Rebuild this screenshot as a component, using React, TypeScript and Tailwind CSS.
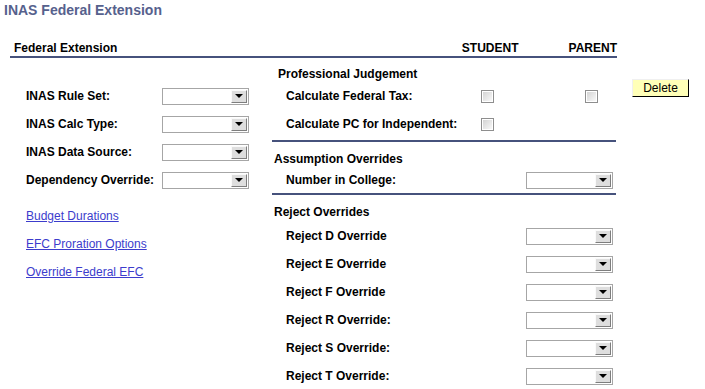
import React from "react";

function Dropdown() {
  return (
    <div className="w-[87px] h-[17px] border border-[#a6a6a6] bg-white flex justify-end items-stretch p-px">
      <div className="w-[16px] bg-[#dedede] border border-t-[#fafafa] border-l-[#fafafa] border-r-[#7e7e7e] border-b-[#7e7e7e] flex items-center justify-center">
        <div className="w-0 h-0 border-l-[4px] border-r-[4px] border-t-[4px] border-l-transparent border-r-transparent border-t-black" />
      </div>
    </div>
  );
}

function Checkbox() {
  return (
    <div className="w-[13px] h-[13px] border border-[#8e8e8e] bg-white p-px">
      <div className="w-full h-full bg-gradient-to-br from-[#d4d4d4] to-[#f8f8f8]" />
    </div>
  );
}

const leftRows = ["INAS Rule Set:", "INAS Calc Type:", "INAS Data Source:", "Dependency Override:"];
const links = ["Budget Durations", "EFC Proration Options", "Override Federal EFC"];
const rejects = [
  "Reject D Override",
  "Reject E Override",
  "Reject F Override",
  "Reject R Override:",
  "Reject S Override:",
  "Reject T Override:",
];

export default function App() {
  return (
    <div
      className="w-[705px] h-[389px] bg-white text-black overflow-hidden"
      style={{ fontFamily: '"Liberation Sans", Arial, sans-serif' }}
    >
      <div className="pl-[4px] pt-[1px] text-[14px] leading-[18px] font-bold text-[#56618d]">
        INAS Federal Extension
      </div>

      {/* cabeçalho */}
      <div className="mt-[21px] ml-[10px] w-[607px] h-[18px] border-b-2 border-[#46527c] flex text-[12px] leading-[16px] font-bold">
        <div className="w-[453px] pl-[4px]">Federal Extension</div>
        <div className="w-[107px]">STUDENT</div>
        <div>PARENT</div>
      </div>

      <div className="flex">
        {/* coluna esquerda */}
        <div className="w-[262px] ml-[10px] pt-[24px]">
          {leftRows.map((label) => (
            <div key={label} className="h-[28px] flex items-center pl-[16px]">
              <div className="w-[136px] text-[12px] font-bold">{label}</div>
              <Dropdown />
            </div>
          ))}
          <div className="mt-[8px]">
            {links.map((l) => (
              <div key={l} className="h-[28px] flex items-center pl-[16px]">
                <a href="#" className="text-[12px] text-[#3c3ccc] underline">
                  {l}
                </a>
              </div>
            ))}
          </div>
        </div>

        {/* coluna direita */}
        <div className="w-[344px] pt-[9px] text-[12px] font-bold">
          <div className="pl-[6px] leading-[15px]">Professional Judgement</div>
          <div className="h-[28px] flex items-center pl-[14px]">
            <div className="w-[195px]">Calculate Federal Tax:</div>
            <div className="w-[104px]">
              <Checkbox />
            </div>
            <Checkbox />
          </div>
          <div className="h-[28px] flex items-center pl-[14px]">
            <div className="w-[195px]">Calculate PC for Independent:</div>
            <Checkbox />
          </div>
          <div className="mt-[2px] border-b-2 border-[#46527c]" />

          <div className="pt-[9px] pl-[2px] leading-[16px]">Assumption Overrides</div>
          <div className="h-[26px] flex items-center pl-[14px]">
            <div className="w-[240px]">Number in College:</div>
            <Dropdown />
          </div>
          <div className="border-b-2 border-[#46527c]" />

          <div className="pt-[9px] pl-[2px] leading-[16px] mb-[2px]">Reject Overrides</div>
          {rejects.map((r) => (
            <div key={r} className="h-[28px] flex items-center pl-[14px]">
              <div className="w-[240px]">{r}</div>
              <Dropdown />
            </div>
          ))}
        </div>

        <div className="ml-[16px] pt-[21px] flex items-start">
          <button className="w-[57px] h-[18px] bg-[#ffffb8] border border-t-[#f0f0f0] border-l-[#f0f0f0] border-r-black border-b-black text-[12px] leading-[14px] text-black">
            Delete
          </button>
        </div>
      </div>
    </div>
  );
}
